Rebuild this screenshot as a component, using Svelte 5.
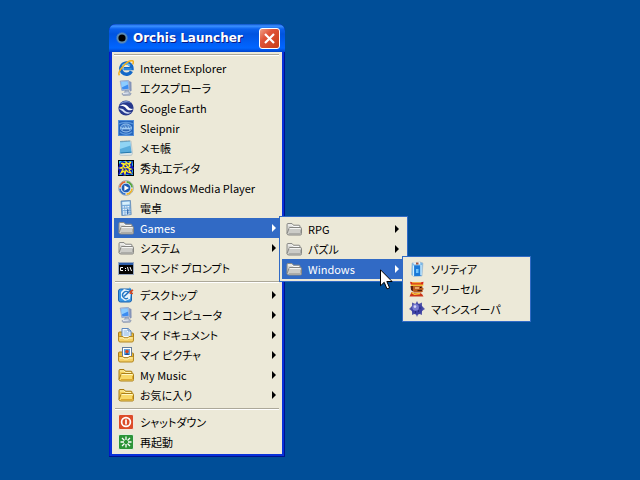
<script lang="ts">
  type Item = {
    label: string;
    icon: string;
    more?: boolean;
    children?: Item[];
  };

  const games: Item[] = [
    { label: "RPG", icon: "folder-gray", more: true },
    { label: "パズル", icon: "folder-gray", more: true },
    {
      label: "Windows",
      icon: "folder-gray",
      more: true,
      children: [
        { label: "ソリティア", icon: "solitaire" },
        { label: "フリーセル", icon: "freecell" },
        { label: "マインスイーパ", icon: "mine" },
      ],
    },
  ];

  const groups: Item[][] = [
    [
      { label: "Internet Explorer", icon: "ie" },
      { label: "エクスプローラ", icon: "computer" },
      { label: "Google Earth", icon: "earth" },
      { label: "Sleipnir", icon: "sleipnir" },
      { label: "メモ帳", icon: "notepad" },
      { label: "秀丸エディタ", icon: "hidemaru" },
      { label: "Windows Media Player", icon: "wmp" },
      { label: "電卓", icon: "calc" },
      { label: "Games", icon: "folder-gray", more: true, children: games },
      { label: "システム", icon: "folder-gray", more: true },
      { label: "コマンド プロンプト", icon: "cmd" },
    ],
    [
      { label: "デスクトップ", icon: "desktop", more: true },
      { label: "マイ コンピュータ", icon: "computer", more: true },
      { label: "マイ ドキュメント", icon: "documents", more: true },
      { label: "マイ ピクチャ", icon: "pictures", more: true },
      { label: "My Music", icon: "folder", more: true },
      { label: "お気に入り", icon: "folder", more: true },
    ],
    [
      { label: "シャットダウン", icon: "shutdown" },
      { label: "再起動", icon: "restart" },
    ],
  ];

  // Label of the expanded entry at each menu depth
  let path = $state(["Games", "Windows"]);

  function pick(item: Item, depth: number) {
    path = item.children ? [...path.slice(0, depth), item.label] : path.slice(0, depth);
  }
</script>

{#snippet icon(name: string)}
  <svg class="icon" viewBox="0 0 16 16" aria-hidden="true">
    {#if name === "ie"}
      <path d="M13.4 11.2A5.6 5.6 0 1 1 14 8.6H5.6" fill="none" stroke="#1268c8" stroke-width="3.4" />
      <path d="M4.2 5.8A4.8 4.8 0 0 1 12 5.6" fill="none" stroke="#5fc0f6" stroke-width="1.6" />
      <path d="M5 9h8.6" stroke="#48a8ec" stroke-width="1" />
      <path d="M1.5 15.2C-1.4 12.5 9-.5 14.6.8c1.2.4.8 2.4 0 3.6" fill="none" stroke="#f0b020" stroke-width="1.5" />
    {:else if name === "computer"}
      <path d="M2.2 1 10.5.4l1.3 9.4-8 .8z" fill="#b8c8e4" stroke="#7890c0" stroke-width=".6" />
      <path d="M3.2 2 9.7 1.5l1 7.3-6.3.8z" fill="#3c8cf0" />
      <path d="m3.2 2 6.5-.5.4 3-6.5 3z" fill="#8cccff" />
      <path d="m11 1 2.4 1 .2 8.8-1.8 1z" fill="#8494b8" />
      <path d="m7 10.6 3.4-.4.8 2.4 2 .8-1 1.8-7 .4-1.4-1.8 2.8-1z" fill="#a8b4c8" stroke="#7886a4" stroke-width=".5" />
      <path d="m5 13.4 5.6-.4" stroke="#eef2fa" />
    {:else if name === "earth"}
      <circle cx="8" cy="8" r="7.6" fill="#26388c" />
      <path d="M1.6 4.2C5 .2 10-.2 13.8 3.2 10 1.4 6 2 1.6 4.2z" fill="#7c98d4" />
      <path d="M.6 6.2C5 3.4 8.4 4.4 10.4 7c1.4 1.8 3 2.2 5 1.8-2.8 2.4-5.8 1.8-7.2-.2C6.4 6 4 5.2.6 6.2z" fill="#fff" />
      <path d="M.8 8.8c3-.6 4.4.4 6 2 2 1.8 4.2 2 6.8 1.4-3 2.2-6 1.8-8.2-.2C3.8 10.6 2.6 9.6.8 8.8z" fill="#d4e0f6" />
    {:else if name === "sleipnir"}
      <rect width="16" height="16" fill="#2464bc" />
      <rect x=".5" y=".5" width="15" height="15" fill="none" stroke="#5490d8" />
      <path d="M1 4c3-2 11-2 14 0M2 12c3 3 9 3 12 0" fill="none" stroke="#5c98dc" stroke-width="1.3" />
      <ellipse cx="8" cy="8" rx="5.5" ry="4" fill="#4480cc" stroke="#94c0ec" />
      <path d="m2 7 3 1 2-3 1 3 2-3 1 3 3-1-3 3H5z" fill="#a0ccf4" />
      <path d="M5 10h6M6 7h1M9 7h1" stroke="#184c9c" />
    {:else if name === "notepad"}
      <path d="m3 1.500 10-.6 1.500 12.400-1 2-10 .4-2-1z" fill="#d8e4e8" stroke="#9cacb4" stroke-width=".5" />
      <path d="m2 1.500 10-.6 1.600 11.500-11.600.8z" fill="#58acdc" />
      <path d="m2 1.500 10-.6.6 4.600L2 9z" fill="#90d4f4" />
      <path d="m2.500 1.600 9.500-.6" stroke="#587c94" stroke-width="1.4" stroke-dasharray="1 1" />
      <path d="m2.500 13 11-.8" stroke="#2478ac" />
    {:else if name === "hidemaru"}
      <rect x=".5" y=".5" width="15" height="15" fill="#28d0e4" stroke="#000" />
      <path d="m1 4 3-3 3 1 2-1 3 1 3-1-1 4 2 3-2 3 1 3-3 1-3-1-3 2-3-2-3 1 1-4-2-3 2-2z" fill="#1018b8" />
      <path d="m3 3 3 2-1 2-3 1 3 1-2 4 3-2 1 3 1-4 2 2 3 1-2-3 2-1-3-1 2-2-1-1 2-3-3 2-2-2v3l2 2-3 1-2-2 2-2-3-1" fill="none" stroke="#fff020" stroke-width="1.2" />
    {:else if name === "wmp"}
      <circle cx="8" cy="8" r="7.4" fill="#fff" stroke="#8c98a4" stroke-width=".8" />
      <path d="M2 7.5A6 6 0 0 1 7.5 2" fill="none" stroke="#e06834" stroke-width="2" />
      <path d="M8.5 2A6 6 0 0 1 14 7.5" fill="none" stroke="#58a838" stroke-width="2" />
      <path d="M14 8.5A6 6 0 0 1 8.5 14" fill="none" stroke="#f0b424" stroke-width="2" />
      <path d="M7.5 14A6 6 0 0 1 2 8.5" fill="none" stroke="#3474c8" stroke-width="2" />
      <circle cx="8" cy="8" r="4.8" fill="#205cb4" stroke="#dce8f4" stroke-width=".8" />
      <path d="M6.4 5.2 11 8l-4.600 2.800z" fill="#fff" />
    {:else if name === "calc"}
      <path d="m3 1 9.400-.6.8 14.200-9.400 1z" fill="#78acdc" stroke="#5480b0" stroke-width=".7" />
      <path d="m4.200 2 7.400-.4.2 3-7.400.5z" fill="#d8f0fc" />
      <path d="m4.600 7 7.400-.4M4.800 9.500l7.400-.4M5 12l7.400-.4M5 14l7.400-.4" stroke="#eef8ff" stroke-width="1.3" stroke-dasharray="1.6 .8" />
      <path d="M9.800 9.300v4.800" stroke="#2c60a4" stroke-width="1.2" />
    {:else if name === "folder-gray"}
      <path d="M1 12.500V3.500Q1 2.500 2 2.500h4l1.500 1.700h5.500q1 0 1 1V7" fill="#d8d8d4" stroke="#8c8c88" />
      <path d="M2 4h4l1.500 1.500H13" fill="none" stroke="#fafafa" />
      <path d="M4 6.500h10.500q1 0 1 1v5q0 1.500-1 1.500H3q-2 0-2-1.500L3 7.500q0-1 1-1z" fill="#ccccc8" stroke="#868682" />
      <path d="M3.500 7.500h11" stroke="#f4f4f2" />
      <path d="M3 12.500h11.500V9" fill="none" stroke="#acaca8" />
    {:else if name === "cmd"}
      <rect y="2" width="16" height="13" fill="#98a8c0" />
      <rect x="1" y="3" width="14" height="2" fill="#2c5ca8" />
      <rect x="1" y="5" width="14" height="9" fill="#050505" />
      <path d="M5 7.500H2.500v3H5M7 8.500h1M7 10.500h1M9.500 7l1 4M12 7l1.500 4" fill="none" stroke="#fff" />
    {:else if name === "desktop"}
      <rect x=".5" y="2" width="13" height="13" rx="2" fill="#3c98e4" stroke="#1c64b0" />
      <path d="m3 5 3-3 7 2-1 8-5 2-4-3z" fill="#e8f4fc" />
      <path d="M10.500 5.500A3.500 3.500 0 1 0 10 11" fill="none" stroke="#2478c4" stroke-width="1.4" />
      <path d="M6 9.500 13 3" stroke="#2070c0" stroke-width="1.6" />
      <path d="m12 5 3-2M11.500 6l3.500.5" stroke="#d84820" stroke-width="1.7" />
      <path d="m11 1 2 1" stroke="#44a0e8" />
    {:else if name === "documents" || name === "pictures"}
      <path d="M.5 13V6Q.5 5 1.500 5H4l1 1h9.500q1 0 1 1v6" fill="#e8b838" stroke="#a87c18" />
      {#if name === "documents"}
        <path d="M4 1.500h6l3 2.500v7.500H4z" fill="#f4faff" stroke="#5c88c0" />
        <path d="M5.500 4H9M5.500 6h6M5.500 8h6" stroke="#84b0e0" />
        <path d="M10 1.500V4h3" fill="none" stroke="#5c88c0" />
      {:else}
        <rect x="4.500" y=".5" width="9" height="10" fill="#fff" stroke="#647c9c" />
        <rect x="6" y="2" width="6" height="6" fill="#5ca4e4" />
        <circle cx="9" cy="4.500" r="1.800" fill="#d84820" />
        <path d="M7 8c0-2.500 4-2.500 4 0z" fill="#244c8c" />
      {/if}
      <path d="M1.500 9.500H5l1 1.200h4l1-1.200h3.500q1 0 1 1V13q0 2-1.500 2H2Q.5 15 .5 13v-2.500q0-1 1-1z" fill="#f4d068" stroke="#b48820" />
      <path d="M2 11h3l1 1h4l1-1h3.500" fill="none" stroke="#fff4b8" />
    {:else if name === "folder"}
      <path d="M1 12.500V3.500Q1 2.500 2 2.500h4l1.500 1.700h5.500q1 0 1 1V7" fill="#f0cc58" stroke="#a87c14" />
      <path d="M2 4h4l1.500 1.500H13" fill="none" stroke="#fff4b0" />
      <path d="M4 6.500h10.500q1 0 1 1v5q0 1.500-1 1.500H3q-2 0-2-1.500L3 7.500q0-1 1-1z" fill="#f8d868" stroke="#ac8018" />
      <path d="M3.500 7.500h11" stroke="#fff8c4" />
      <path d="M3 12.500h11.500V9" fill="none" stroke="#dca830" />
    {:else if name === "shutdown"}
      <rect x=".5" y=".5" width="15" height="15" rx="1.5" fill="#dc4c28" stroke="#f4e4dc" />
      <circle cx="8" cy="8" r="4.4" fill="none" stroke="#fff" stroke-width="1.7" />
      <path d="M8 5.500v5" stroke="#fff" stroke-width="1.7" />
    {:else if name === "restart"}
      <rect x=".5" y=".5" width="15" height="15" rx="1.5" fill="#2c9438" stroke="#e0f0e0" />
      <path d="M8 2.500V6M8 10v3.500M2.500 8H6M10 8h3.500M4 4l2.500 2.500M9.500 9.500 12 12M12 4 9.500 6.500M6.500 9.500 4 12" stroke="#fff" stroke-width="1.3" />
    {:else if name === "solitaire"}
      <path d="m3 2 8-1 3 1-1 13-8 .5L2.500 14z" fill="#78b8e8" stroke="#a8b8c8" stroke-width=".6" />
      <path d="M5 4.500h6.500V15H5z" fill="#1878d8" />
      <path d="M4.500 4.500V15M12 4v10" stroke="#d4f0ff" stroke-width="1.2" />
      <path d="m4 1.500 7-.5.5 2.500H5z" fill="#e8f0f4" />
      <path d="M7 1.500h2.500v2H7z" fill="#a4543c" />
      <path d="M7 8h2.500v4H7z" fill="#70c4fc" />
    {:else if name === "freecell"}
      <path d="M4 4h9l.5 2.500 1.500 1.500-1.500 1 .5 1.500-2 1H5L2.500 8z" fill="#b85c20" />
      <path d="M4 4.500v6l-2-1.500-.5-4z" fill="#5c2010" />
      <path d="M6 6h4v2H6z" fill="#e8a468" />
      <path d="M11 6h1.500v1H11z" fill="#200c08" />
      <path d="M8.500 9.500H13" stroke="#501c0c" stroke-width="1.2" />
      <path d="m1 .800 4 .7h6l3.500-.7-.5 3.400H2z" fill="#d82818" />
      <path d="M2 4.200h12.500" stroke="#f8d43c" stroke-width="1.3" />
      <path d="M3 1.800h9" stroke="#f8b82c" />
      <path d="m2.500 11 3 1H11l2 1 1.500 2.500H.5z" fill="#cc3418" />
      <path d="m2.500 11.500 3 1.800 5.500-.8" fill="none" stroke="#f8c83c" stroke-width="1.4" />
    {:else if name === "mine"}
      <path d="m8 0 1.500 3L13 1.500 13 5l3 3-3 2v4l-3.500-1.500L8 16l-1.500-3.500L3 14v-4L0 8l3-3V1.500L6.500 3z" fill="#5458a8" />
      <circle cx="8" cy="8" r="5.6" fill="#3c40a4" />
      <circle cx="6.600" cy="6.400" r="3.300" fill="#787cd0" />
      <circle cx="6" cy="5.600" r="1.300" fill="#d8daf8" />
      <path d="M9 10h1M10.500 7h1M6 11h1" stroke="#14165c" />
    {/if}
  </svg>
{/snippet}

{#snippet menu(items: Item[], depth: number)}
  <ul class="menu">
    {#each items as item}
      {@const open = !!item.children && path[depth] === item.label}
      <li>
        <button
          class="item"
          class:open
          type="button"
          aria-haspopup={item.more ? "menu" : undefined}
          aria-expanded={item.children ? open : undefined}
          onclick={() => pick(item, depth)}
        >
          {@render icon(item.icon)}
          <span class="label">{item.label}</span>
          {#if item.more}
            <svg class="arrow" viewBox="0 0 4 8" aria-hidden="true"><path d="M0 0v8l4-4z" /></svg>
          {/if}
        </button>
        {#if open && item.children}
          <div class="submenu">
            {@render menu(item.children, depth + 1)}
          </div>
        {/if}
      </li>
    {/each}
  </ul>
{/snippet}

<main class="desktop">
  <section class="window" aria-label="Orchis Launcher">
    <header>
      <svg class="logo" viewBox="0 0 14 14" aria-hidden="true">
        <circle cx="7" cy="7" r="5.5" fill="#5c8cb4" />
        <circle cx="7" cy="7" r="5.5" fill="none" stroke="#3474d4" stroke-dasharray="1 1" />
        <circle cx="7" cy="7" r="3.6" fill="#000" />
      </svg>
      <h1>Orchis Launcher</h1>
      <button class="close" type="button" aria-label="Close">
        <svg viewBox="0 0 19 19" aria-hidden="true">
          <path d="m5 5 9 9M14 5l-9 9" stroke="#fff" stroke-width="2.2" />
        </svg>
      </button>
    </header>
    <div class="body">
      {#each groups as group}
        <hr />
        {@render menu(group, 0)}
      {/each}
    </div>
  </section>

  <svg class="cursor" viewBox="0 0 13 21" aria-hidden="true">
    <path d="M.5.8v16l3.700-3.500 2.800 6.600 2.600-1.100-2.800-6.300h5.300z" fill="#fff" stroke="#000" />
  </svg>
</main>

<style>
  :global(body) {
    background: #004e98;
  }

  .desktop {
    position: relative;
    min-height: 100vh;
    font-family: "Noto Sans CJK JP", sans-serif;
    font-size: 11px;
    font-feature-settings: "palt";
    color: #000;
  }

  .window {
    position: absolute;
    left: 109px;
    top: 24px;
    width: 176px;
    box-sizing: border-box;
    padding: 0 3px 3px;
    background: #0831d9;
    border-radius: 7px 7px 0 0;
    box-shadow: inset -1px -1px #00138c, inset 1px 0 #0019cf;
  }

  header {
    display: flex;
    align-items: center;
    gap: 4px;
    height: 28px;
    margin: 0 -3px;
    padding: 0 5px 0 6px;
    box-sizing: border-box;
    border-radius: 7px 7px 0 0;
    background: linear-gradient(
      #0a50c8 0,
      #3c92ff 2px,
      #0a62ee 5px,
      #0054e0 10px,
      #0060f8 20px,
      #0066ff 24px,
      #0044cc 28px
    );
  }

  .logo {
    width: 14px;
    height: 14px;
  }

  h1 {
    flex: 1;
    margin: 0;
    font-family: "DejaVu Sans", sans-serif;
    font-size: 12px;
    font-weight: bold;
    line-height: 16px;
    white-space: nowrap;
    color: #fff;
    text-shadow: 1px 1px #0a1883;
  }

  .close {
    width: 21px;
    height: 21px;
    padding: 0;
    border: 1px solid #fff;
    border-radius: 3px;
    background: linear-gradient(135deg, #f0a088 0%, #e0553a 35%, #c83c14 100%);
  }

  .close svg {
    display: block;
  }

  .body {
    padding: 0 0 2px 2px;
    background: #ece9d8;
  }

  hr {
    height: 1px;
    margin: 3px 3px 2px 1px;
    border: 0;
    background: #aca899;
    border-bottom: 1px solid #fff;
  }

  .body > hr:first-child {
    margin-top: 0;
    margin-left: 0;
    border-top: 2px solid #ece9d8;
  }

  .menu {
    margin: 0;
    padding: 0;
    list-style: none;
  }

  li {
    position: relative;
  }

  .item {
    display: flex;
    align-items: center;
    gap: 6px;
    width: 100%;
    height: 20px;
    padding: 0 6px 0 4px;
    border: 0;
    background: none;
    color: inherit;
    font: inherit;
    font-feature-settings: inherit;
    line-height: 20px;
    text-align: left;
    white-space: nowrap;
  }

  .item.open {
    background: #316ac5;
    color: #fff;
  }

  .icon {
    flex: none;
    width: 16px;
    height: 16px;
  }

  .label {
    flex: 1;
  }

  .arrow {
    width: 4px;
    height: 8px;
    fill: currentColor;
  }

  .submenu {
    position: absolute;
    left: calc(100% - 3px);
    top: -2px;
    z-index: 1;
    width: 129px;
    box-sizing: border-box;
    padding: 2px;
    border: 1px solid #316ac5;
    background: #ece9d8;
  }

  .submenu .submenu {
    top: -3px;
  }

  .cursor {
    position: absolute;
    left: 380px;
    top: 269px;
    z-index: 2;
    width: 13px;
    height: 21px;
  }
</style>
